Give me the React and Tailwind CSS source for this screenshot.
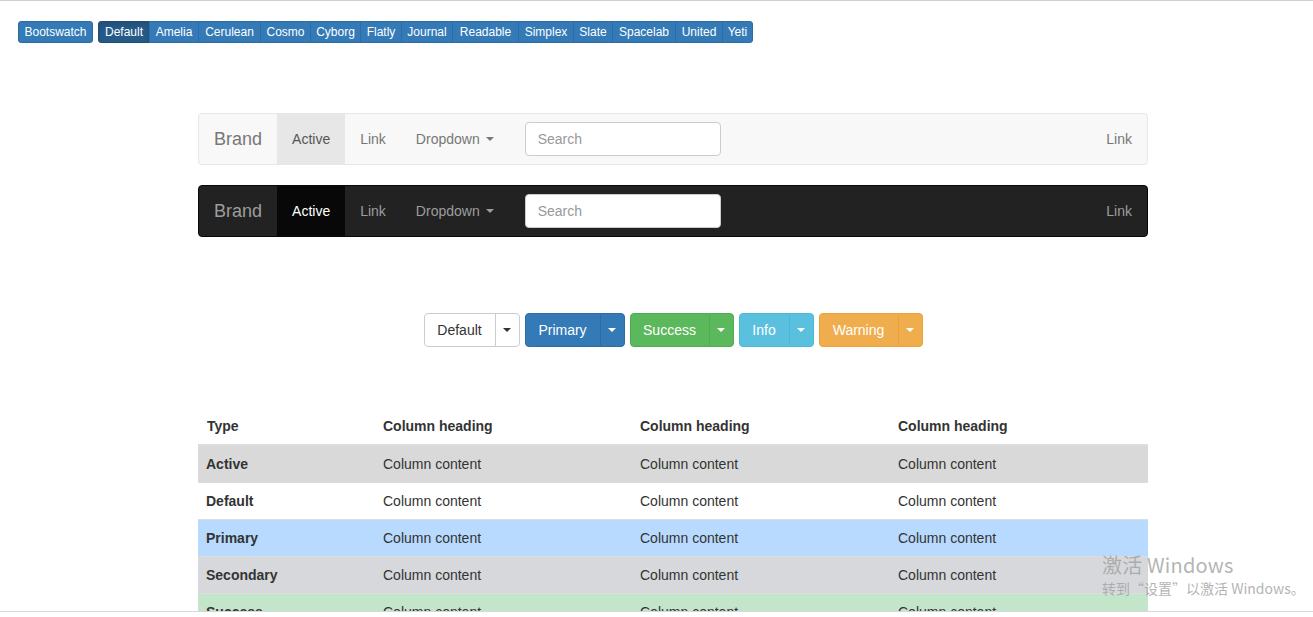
import React from "react";

const themes = [
  ["Default", "w-[52px]"],
  ["Amelia", "w-[50px]"],
  ["Cerulean", "w-[63px]"],
  ["Cosmo", "w-[51px]"],
  ["Cyborg", "w-[51px]"],
  ["Flatly", "w-[42px]"],
  ["Journal", "w-[52px]"],
  ["Readable", "w-[67px]"],
  ["Simplex", "w-[56px]"],
  ["Slate", "w-[40px]"],
  ["Spacelab", "w-[64px]"],
  ["United", "w-[48px]"],
  ["Yeti", "w-[31px]"],
];

function Caret({ cls = "" }) {
  return (
    <span className={"inline-block w-0 h-0 border-t-4 border-x-4 border-x-transparent border-t-current align-middle " + cls} />
  );
}

function Navbar({ dark }) {
  const wrap = dark
    ? "bg-[#222222] border-[#080808]"
    : "bg-[#f8f8f8] border-[#e7e7e7]";
  const brand = dark ? "text-[#9d9d9d]" : "text-[#777777]";
  const link = dark ? "text-[#9d9d9d]" : "text-[#777777]";
  const active = dark ? "bg-[#080808] text-white" : "bg-[#e7e7e7] text-[#555555]";
  return (
    <div className={"flex h-[52px] border rounded-[4px] items-stretch " + wrap}>
      <div className={"px-[15px] flex items-center text-[18px] leading-[20px] " + brand}>Brand</div>
      <div className={"px-[15px] flex items-center text-[14px] " + active}>Active</div>
      <div className={"px-[15px] flex items-center text-[14px] " + link}>Link</div>
      <div className={"px-[15px] flex items-center text-[14px] " + link}>
        Dropdown<Caret cls="ml-[6px]" />
      </div>
      <div className="pl-[16px] pr-[15px] flex items-center">
        <div className="w-[196px] h-[34px] border border-[#cccccc] rounded-[4px] bg-white px-[12px] flex items-center text-[14px] text-[#999999]">Search</div>
      </div>
      <div className="flex-1" />
      <div className={"px-[15px] flex items-center text-[14px] " + link}>Link</div>
    </div>
  );
}

function SplitBtn({ label, w, bg, border, text }) {
  return (
    <div className="flex h-[34px] text-[14px]">
      <div className={"flex items-center justify-center border rounded-l-[4px] " + w + " " + bg + " " + border + " " + text}>{label}</div>
      <div className={"w-[25px] -ml-px flex items-center justify-center border rounded-r-[4px] " + bg + " " + border + " " + text}>
        <Caret />
      </div>
    </div>
  );
}

const rows = [
  ["Active", "bg-[#d9d9d9]"],
  ["Default", "bg-white"],
  ["Primary", "bg-[#b8daff]"],
  ["Secondary", "bg-[#d6d8db]"],
  ["Success", "bg-[#c3e6cb]"],
  ["Danger", "bg-[#f5c6cb]"],
];

export default function App() {
  return (
    <div className="relative h-[617px] overflow-hidden bg-white text-[#333333]" style={{ fontFamily: '"Liberation Sans", Arial, sans-serif' }}>
      <div className="h-px bg-[#d0d0d0]" />
      <div className="flex gap-[5px] ml-[18px] mt-[20px] text-[12px] leading-[18px] text-white">
        <div className="bg-[#337ab7] border border-[#2e6da4] rounded-[3px] w-[75px] text-center py-px">Bootswatch</div>
        <div className="flex">
          {themes.map(([t, w], i) => (
            <div
              key={t}
              className={
                "border py-px text-center " + w + " " +
                (i === 0
                  ? "bg-[#265a88] border-[#204d74] rounded-l-[3px] shadow-[inset_0_3px_5px_rgba(0,0,0,0.125)]"
                  : "bg-[#337ab7] border-[#2e6da4] -ml-px") +
                (i === themes.length - 1 ? " rounded-r-[3px]" : "")
              }
            >
              {t}
            </div>
          ))}
        </div>
      </div>

      <div className="ml-[198px] w-[950px]">
        <div className="mt-[70px]">
          <Navbar />
        </div>
        <div className="mt-[20px]">
          <Navbar dark />
        </div>

        <div className="mt-[76px] flex justify-center gap-[5px]">
          <SplitBtn label="Default" w="w-[72px]" bg="bg-white" border="border-[#cccccc]" text="text-[#333333]" />
          <SplitBtn label="Primary" w="w-[76px]" bg="bg-[#337ab7]" border="border-[#2e6da4]" text="text-white" />
          <SplitBtn label="Success" w="w-[80px]" bg="bg-[#5cb85c]" border="border-[#4cae4c]" text="text-white" />
          <SplitBtn label="Info" w="w-[51px]" bg="bg-[#5bc0de]" border="border-[#46b8da]" text="text-white" />
          <SplitBtn label="Warning" w="w-[80px]" bg="bg-[#f0ad4e]" border="border-[#eea236]" text="text-white" />
        </div>

        <table className="mt-[61px] w-[950px] border-collapse text-[14px] leading-[20px] text-[#333333]">
          <colgroup>
            <col className="w-[177px]" />
            <col className="w-[257px]" />
            <col className="w-[258px]" />
            <col className="w-[258px]" />
          </colgroup>
          <thead>
            <tr>
              <th className="text-left font-bold pl-[9px] pr-[8px] pt-[8px] pb-[8px] border-b-2 border-[#dddddd]">Type</th>
              <th className="text-left font-bold px-[8px] pt-[8px] pb-[8px] border-b-2 border-[#dddddd]">Column heading</th>
              <th className="text-left font-bold px-[8px] pt-[8px] pb-[8px] border-b-2 border-[#dddddd]">Column heading</th>
              <th className="text-left font-bold px-[8px] pt-[8px] pb-[8px] border-b-2 border-[#dddddd]">Column heading</th>
            </tr>
          </thead>
          <tbody>
            {rows.map(([name, bg]) => (
              <tr key={name} className={bg}>
                <th className="text-left font-bold pl-[8px] pr-[8px] py-[8px] border-t border-[#dddddd]">{name}</th>
                <td className="px-[8px] py-[8px] border-t border-[#dddddd]">Column content</td>
                <td className="px-[8px] py-[8px] border-t border-[#dddddd]">Column content</td>
                <td className="px-[8px] py-[8px] border-t border-[#dddddd]">Column content</td>
              </tr>
            ))}
          </tbody>
        </table>
      </div>

      <div className="absolute left-[1102px] top-[552px] text-[#a0a0a0]/80 pointer-events-none" style={{ fontFamily: '"Noto Sans CJK SC", "Liberation Sans", sans-serif' }}>
        <div className="text-[20px] leading-[26px] tracking-[0.2px]">激活 Windows</div>
        <div className="text-[14px] leading-[20px]">转到“设置”以激活 Windows。</div>
      </div>

      <div className="absolute left-0 right-0 top-[611px] h-[6px] bg-white border-t border-[#d8d8d8]" />
    </div>
  );
}
